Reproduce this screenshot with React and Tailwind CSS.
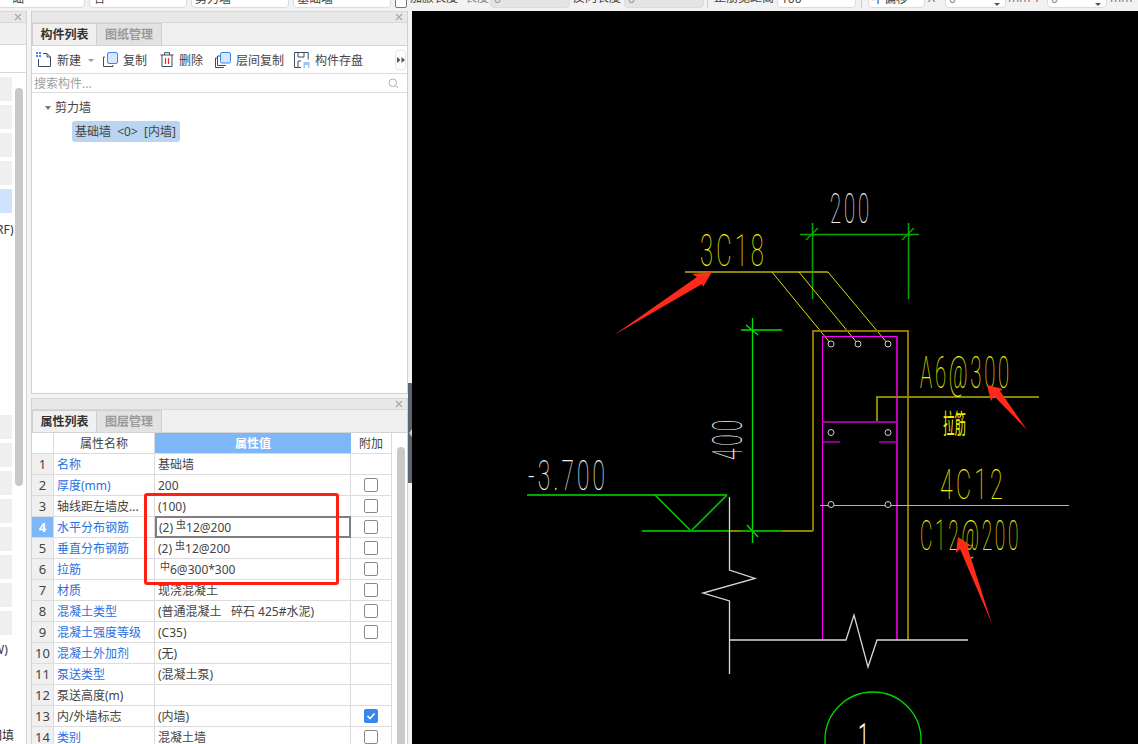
import React from "react";

const Tabs = ({ a, b }) => (
  <div className="flex h-[23px] shrink-0 border-b border-[#d4d4d4] bg-[#f0f0f0]">
    <div className="flex w-[65px] items-center justify-center border border-b-0 border-[#cfcfcf] bg-[#f0f0f0] font-bold text-[#333]">{a}</div>
    <div className="flex w-[65px] items-center justify-center border border-l-0 border-b-0 border-[#cfcfcf] bg-[#e2e2e2] font-bold text-[#999]">{b}</div>
  </div>
);

const Close = () => (
  <div className="flex h-[12px] shrink-0 items-center justify-end border-y border-[#d8d8d8] bg-[#e8e8e8] pr-[4px]">
    <svg width="8" height="8" viewBox="0 0 8 8"><path d="M1 1l6 6M7 1L1 7" stroke="#a8a8a8" strokeWidth="1.2" /></svg>
  </div>
);

const IconNew = () => (
  <svg width="16" height="16" viewBox="0 0 16 16" fill="none">
    <path d="M2.5 7v7.5h12V5L11 1.5H7" stroke="#3d4c5f" />
    <path d="M11 1.5V5h3.5" stroke="#3d4c5f" />
    <path d="M0 0h2v2H0zM3 0h2v2H3zM0 3h2v2H0zM3 3h2v2H3z" fill="#3a86f0" />
  </svg>
);
const IconCopy = () => (
  <svg width="16" height="16" viewBox="0 0 16 16" fill="none">
    <path d="M3 5H1.500v9.500h9.500V13" stroke="#3d4c5f" />
    <rect x="5.500" y="0.500" width="10" height="11" rx="1.500" fill="#d6e7ff" stroke="#3a86f0" />
  </svg>
);
const IconTrash = () => (
  <svg width="14" height="15" viewBox="0 0 14 15" fill="none">
    <path d="M.5 3h13M4.500 3V.7h5V3M2 3v11.500h10V3" stroke="#3d4c5f" />
    <path d="M5.500 6v6M8.500 6v6" stroke="#e0301e" strokeWidth="1.200" />
  </svg>
);
const IconLayer = () => (
  <svg width="16" height="16" viewBox="0 0 16 16" fill="none">
    <path d="M3 6H.5v9.500H9M5 4H2.500v9.500H11" stroke="#3d4c5f" />
    <rect x="5.500" y="0.500" width="10" height="10.500" rx="1.500" fill="#d6e7ff" stroke="#3a86f0" />
  </svg>
);
const IconSave = () => (
  <svg width="16" height="16" viewBox="0 0 16 16" fill="none">
    <path d="M7 15.500H.5V.5h13.700v7" stroke="#3d4c5f" />
    <path d="M4 .5v4.500h6V.5M4 15V9h3" stroke="#3d4c5f" />
    <rect x="9.500" y="10" width="6" height="6" fill="#9cc5f8" />
    <rect x="11" y="13" width="3" height="3" fill="#fff" />
  </svg>
);

const Tool = ({ icon, label, className }) => (
  <div className={"flex items-center gap-[5px] " + className}>
    {icon}
    <span className="pt-[2px]">{label}</span>
  </div>
);

const Field = ({ className, children, caret }) => (
  <div className={"relative h-[24px] shrink-0 overflow-hidden rounded-[4px] border border-[#dcdcdc] px-[3px] leading-[27px] " + className}>
    {children}
    {caret && <span className="absolute bottom-[1px] right-[5px] h-0 w-0 border-x-[3px] border-t-[3px] border-x-transparent border-t-[#555]" />}
  </div>
);

const Lbl = ({ className, children }) => (
  <span className={"h-[24px] shrink-0 overflow-hidden whitespace-nowrap leading-[27px] " + className}>{children}</span>
);

const TopBar = () => (
  <div className="flex h-[11px] shrink-0 items-end overflow-hidden bg-[#f2f2f2] pb-[3px] text-[#444]">
    <Field className="-ml-[2px] w-[87px] bg-white text-right pr-[60px]">础层</Field>
    <Field className="ml-[4px] w-[98px] bg-white">名</Field>
    <Field className="ml-[4px] w-[98px] bg-white">剪力墙</Field>
    <Field className="ml-[4px] w-[98px] bg-white">基础墙</Field>
    <div className="ml-[4px] h-[14px] w-[12px] shrink-0 rounded-[2px] border border-[#777] bg-white" />
    <Lbl className="ml-[3px] w-[55px]">加腋长度</Lbl>
    <Lbl className="w-[25px] text-[#888]">长度</Lbl>
    <Field className="w-[80px] bg-[#e4e4e4] text-[#999]">0</Field>
    <Lbl className="ml-[3px] w-[51px]">反向长度</Lbl>
    <Field className="w-[80px] bg-[#e4e4e4] text-[#999]">0</Field>
    <div className="ml-[3px] h-[24px] w-px shrink-0 bg-[#ccc]" />
    <Lbl className="ml-[6px] w-[63px]">正筋宽距离</Lbl>
    <Field className="w-[79px] bg-white">100</Field>
    <div className="ml-[5px] h-[24px] w-px shrink-0 bg-[#ccc]" />
    <Field className="ml-[6px] w-[57px] bg-white">不偏移</Field>
    <Lbl className="ml-[3px] w-[17px] text-[#777]">X</Lbl>
    <Field caret className="w-[61px] bg-white text-[#888]">0</Field>
    <Lbl className="ml-[2px] w-[39px] text-[#777]">mm Y</Lbl>
    <Field caret className="w-[60px] bg-white text-[#888]">0</Field>
    <Lbl className="ml-[3px] text-[#777]">mm</Lbl>
  </div>
);

const Cells = ({ n, blue }) => (
  <div className="flex flex-col gap-[4px]">
    {Array.from({ length: n }).map((_, i) => (
      <div key={i} className={"h-[24px] w-[12px] " + (blue && i === n - 1 ? "bg-[#cfe3fd]" : "bg-[#efefef]")} />
    ))}
  </div>
);

const LeftPanel = () => (
  <div className="flex w-[27px] shrink-0 flex-col overflow-hidden border-r border-[#d4d4d4] bg-white">
    <Close />
    <div className="h-[22px] shrink-0 border-b border-[#d8d8d8] bg-[#f0f0f0]" />
    <div className="h-[28px] shrink-0 border-b border-[#d8d8d8]" />
    <div className="relative flex-1">
      <div className="pt-[4px]">
        <Cells n={5} blue />
        <div className="mt-[8px] h-[18px] text-[#333] leading-[18px] -ml-[8px] whitespace-nowrap">[RF)</div>
        <div className="mt-[176px]"><Cells n={8} /></div>
        <div className="mt-[6px] h-[18px] -ml-[7px] leading-[18px] text-[#333]">W)</div>
        <div className="mt-[68px] -ml-[10px] whitespace-nowrap text-[#333]">回填</div>
      </div>
      <div className="absolute left-[15px] top-[15px] h-[398px] w-[8px] rounded-[4px] bg-[#c9c9c9]" />
    </div>
  </div>
);

const ComponentPanel = () => (
  <div className="flex h-[383px] shrink-0 flex-col border-x border-b border-[#d0d0d0] bg-white">
    <Close />
    <Tabs a="构件列表" b="图纸管理" />
    <div className="flex h-[28px] shrink-0 items-center border-b border-[#dcdcdc] pl-[4px] text-[#444]">
      <Tool icon={<IconNew />} label="新建" className="" />
      <span className="ml-[7px] mt-[1px] h-0 w-0 border-x-[3px] border-t-[3px] border-x-transparent border-t-[#999]" />
      <Tool icon={<IconCopy />} label="复制" className="ml-[8px]" />
      <Tool icon={<IconTrash />} label="删除" className="ml-[13px]" />
      <Tool icon={<IconLayer />} label="层间复制" className="ml-[12px]" />
      <Tool icon={<IconSave />} label="构件存盘" className="ml-[10px]" />
      <div className="ml-auto mr-[1px] flex h-[20px] w-[11px] items-center justify-center rounded-[3px] border border-[#e6e6e6]">
        <svg width="8" height="6" viewBox="0 0 8 6"><path d="M0 0l3.500 3L0 6zM4.500 0L8 3 4.500 6z" fill="#555" /></svg>
      </div>
    </div>
    <div className="flex h-[19px] shrink-0 items-center justify-between border-b border-[#dcdcdc] pl-[2px] pr-[8px] text-[#a0a0a0]">
      <span className="pt-[2px]">搜索构件...</span>
      <svg width="11" height="11" viewBox="0 0 11 11" fill="none"><circle cx="4.800" cy="4.800" r="3.800" stroke="#b0b0b0" /><path d="M7.600 7.600L10 10" stroke="#b0b0b0" /></svg>
    </div>
    <div className="flex-1 pl-[13px] pt-[4px] text-[#444]">
      <div className="flex h-[21px] items-center">
        <span className="h-0 w-0 border-x-[3px] border-t-[4px] border-x-transparent border-t-[#777]" />
        <span className="ml-[4px]">剪力墙</span>
      </div>
      <div className="ml-[27px] mt-[3px] h-[21px] w-[108px] rounded-[3px] bg-[#bad5f1] px-[3px] leading-[22px] whitespace-pre">基础墙  &lt;0&gt;  [内墙]</div>
    </div>
  </div>
);

const SymWide = () => <span className="ml-[3px] align-[4px] text-[10px] leading-none">虫</span>;
const SymMid = () => <span className="ml-[2px] align-[4px] text-[10px] leading-none">中</span>;

const rows = [
  ["1", "名称", true, "基础墙", null],
  ["2", "厚度(mm)", true, "200", false],
  ["3", "轴线距左墙皮...", false, "(100)", false],
  ["4", "水平分布钢筋", true, <>(2)<SymWide />12@200</>, false],
  ["5", "垂直分布钢筋", true, <>(2)<SymWide />12@200</>, false],
  ["6", "拉筋", true, <><SymMid />6@300*300</>, false],
  ["7", "材质", true, "现浇混凝土", false],
  ["8", "混凝土类型", true, "(普通混凝土   碎石 425#水泥)", false],
  ["9", "混凝土强度等级", true, "(C35)", false],
  ["10", "混凝土外加剂", true, "(无)", null],
  ["11", "泵送类型", true, "(混凝土泵)", null],
  ["12", "泵送高度(m)", false, "", null],
  ["13", "内/外墙标志", false, "(内墙)", true],
  ["14", "类别", true, "混凝土墙", false],
];

const Check = ({ v }) => {
  if (v === null) return null;
  if (v)
    return (
      <div className="flex h-[14px] w-[14px] items-center justify-center rounded-[2px] bg-[#3b86ee]">
        <svg width="10" height="10" viewBox="0 0 10 10" fill="none"><path d="M1.500 5l2.500 2.500L8.500 2.500" stroke="#fff" strokeWidth="1.600" /></svg>
      </div>
    );
  return <div className="h-[14px] w-[14px] rounded-[2px] border border-[#8a8a8a] bg-white" />;
};

const PropRow = ({ r }) => {
  const active = r[0] === "4";
  return (
    <div className="flex h-[21px] shrink-0 border-b border-[#dcdcdc]">
      <div className={"flex w-[22px] shrink-0 items-center justify-center border-r border-[#dcdcdc] pt-[1px] text-[13px] " + (active ? "bg-[#7db7f7] font-bold text-white" : "bg-[#f0f0f0] text-[#444]")}>{r[0]}</div>
      <div className={"flex w-[101px] shrink-0 items-center whitespace-nowrap border-r border-[#dcdcdc] pl-[3px] pt-[2px] " + (r[2] ? "text-[#2a6fe0]" : "text-[#444]")}>{r[1]}</div>
      <div className={"w-[196px] shrink-0 whitespace-pre text-[#444] " + (active ? "-my-px border-2 border-[#7f7f7f] pl-[2px] leading-[19px]" : "border-r border-[#dcdcdc] pl-[3px] leading-[22px]")}>{r[3]}</div>
      <div className="flex flex-1 items-center justify-center border-r border-[#dcdcdc]"><Check v={r[4]} /></div>
    </div>
  );
};

const PropertyPanel = () => (
  <div className="mt-[4px] flex min-h-0 flex-1 flex-col overflow-hidden border-x border-[#d0d0d0] bg-white">
    <Close />
    <Tabs a="属性列表" b="图层管理" />
    <div className="flex min-h-0 flex-1">
      <div className="flex w-[360px] shrink-0 flex-col">
        <div className="flex h-[21px] shrink-0 border-b border-[#dcdcdc]">
          <div className="w-[22px] shrink-0 border-r border-[#dcdcdc]" />
          <div className="flex w-[101px] shrink-0 items-center justify-center border-r border-[#dcdcdc] pt-[2px] text-[#444]">属性名称</div>
          <div className="flex w-[196px] shrink-0 items-center justify-center bg-[#7db7f7] pt-[2px] font-bold text-white">属性值</div>
          <div className="flex flex-1 items-center justify-center border-r border-[#dcdcdc] pt-[2px] text-[#444]">附加</div>
        </div>
        {rows.map((r) => <PropRow key={r[0]} r={r} />)}
      </div>
      <div className="flex-1 pl-[5px] pt-[14px]">
        <div className="h-[320px] w-[8px] rounded-[4px] bg-[#c9c9c9]" />
      </div>
    </div>
  </div>
);

const CadText = ({ x, y, w, size, fill, children, rotate, weight = 100, family = "Roboto", spacing = 6 }) => (
  <text
    x={x}
    y={y}
    fill={fill}
    fontSize={size}
    fontWeight={weight}
    fontFamily={family + ", sans-serif"}
    letterSpacing={spacing}
    textLength={w}
    lengthAdjust="spacingAndGlyphs"
    transform={rotate ? `rotate(${rotate} ${x} ${y})` : undefined}
  >
    {children}
  </text>
);

const Dot = ({ x, y }) => <circle cx={x} cy={y} r="3" fill="#000" stroke="#d0d0d0" strokeWidth="1" />;

const Drawing = () => {
  const Y = "#f0f000";
  const OL = "#888800";
  const BR = "#927400";
  const GD = "#00a800";
  const GB = "#00e000";
  const W = "#f0f0f0";
  const MG = "#ff00ff";
  const DM = "#a000a0";
  const RED = "#ff2a1a";
  return (
    <svg className="block h-full w-full" viewBox="412 11 726 733" preserveAspectRatio="none" fill="none">
      {/* dimension 200 */}
      <path d="M800 234.500H919M812.500 223V299M908.500 223V299M806 240L818 228M902 240L914 228" stroke={GD} strokeWidth="1.500" />
      <path d="M685 272H828" stroke={OL} strokeWidth="2" />
      <path d="M772 272L831 344M799 272L858 344M828 272L888 344" stroke="#e0e000" strokeWidth="1" />
      {/* body */}
      <path d="M813 531V331H908V640" stroke={BR} strokeWidth="2" />
      <path d="M822.500 640V336.500H896.500" stroke={MG} strokeWidth="1" />
      <path d="M897 336V640" stroke={MG} strokeWidth="1.500" />
      <path d="M822 422H897" stroke={DM} strokeWidth="2" />
      <path d="M822 442H840M879 442H897" stroke="#b000b0" strokeWidth="1.500" />
      <path d="M877 421V397H1039" stroke={OL} strokeWidth="2" />
      <path d="M820 505.500H1069" stroke="#c8c800" strokeWidth="1.200" />
      <Dot x={831} y={344} /><Dot x={858} y={344} /><Dot x={888} y={344} />
      <Dot x={831} y={432.5} /><Dot x={888} y={432.5} />
      <Dot x={831} y={504.5} /><Dot x={888} y={504.5} />
      {/* dimension 400 */}
      <path d="M752.500 318V543M741 330H782M746 325L758 335M747 525L758 537" stroke={GB} strokeWidth="1.300" />
      {/* level mark */}
      <path d="M527 495H727" stroke={GD} strokeWidth="2" />
      <path d="M655 495L691 531L727 495" stroke="#00cc00" strokeWidth="1.500" />
      <path d="M642 531H729" stroke={GD} strokeWidth="2" />
      <path d="M729 531H741M782 531H813" stroke={OL} strokeWidth="2" />
      <path d="M741 531H782" stroke={GD} strokeWidth="2" />
      {/* break lines */}
      <path d="M729.500 497V570L755 578.500L703 593L729.500 601V674" stroke="#d8d8d8" strokeWidth="1.300" />
      <path d="M729 640H846L854 615L868 667L877 640H968" stroke="#d8d8d8" strokeWidth="1.300" />
      <circle cx="873" cy="740" r="48" stroke="#00d800" strokeWidth="1.300" />
      {/* CAD texts */}
      <CadText x={830} y={223} w={42} size={43} fill={W}>200</CadText>
      <CadText x={700} y={266} w={67} size={44} fill={Y}>3C18</CadText>
      <CadText x={920} y={388} w={92} size={44} fill={Y}>A6@300</CadText>
      <CadText x={943} y={434} w={23} size={27} fill={Y} weight={400} family="'Noto Sans CJK SC'" spacing={0}>拉筋</CadText>
      <CadText x={940} y={499} w={66} size={43} fill={Y}>4C12</CadText>
      <CadText x={920} y={550} w={101} size={43} fill={Y}>C12@200</CadText>
      <CadText x={528} y={490} w={80} size={43} fill={W}>-3.700</CadText>
      <CadText x={742} y={460} w={43} size={43} fill={W} rotate={-90}>400</CadText>
      <CadText x={858} y={753} w={11} size={43} fill="#ffffff" weight={300} spacing={0}>1</CadText>
      {/* red arrows */}
      <path d="M712 272L703 287L702 284L614 335L697 277L692 274Z" fill={RED} />
      <path d="M987 385L1003 389L1000 391L1027 430L994 396L991 401Z" fill={RED} />
      <path d="M958 537L972 546L967 546L992 624L960 549L956 553Z" fill={RED} />
    </svg>
  );
};

export default function App() {
  return (
    <div className="relative flex h-[744px] w-[1138px] flex-col overflow-hidden bg-[#f4f4f4] font-['Noto_Sans','Noto_Sans_CJK_SC',sans-serif] text-[12px]">
      <TopBar />
      <div className="flex min-h-0 flex-1">
        <LeftPanel />
        <div className="w-[4px] shrink-0" />
        <div className="flex w-[377px] shrink-0 flex-col">
          <ComponentPanel />
          <PropertyPanel />
        </div>
        <div className="w-[4px] shrink-0">
          <div className="mt-[372px] flex h-[100px] items-center justify-center bg-[#5b6670]">
            <span className="h-0 w-0 border-y-[4px] border-r-[3px] border-y-transparent border-r-[#c8c8c8]" />
          </div>
        </div>
        <div className="min-w-0 flex-1 bg-black">
          <Drawing />
        </div>
      </div>
      <div className="absolute left-[144px] top-[493px] h-[92px] w-[195px] rounded-[3px] border-[3px] border-[#ff2013]" />
    </div>
  );
}
